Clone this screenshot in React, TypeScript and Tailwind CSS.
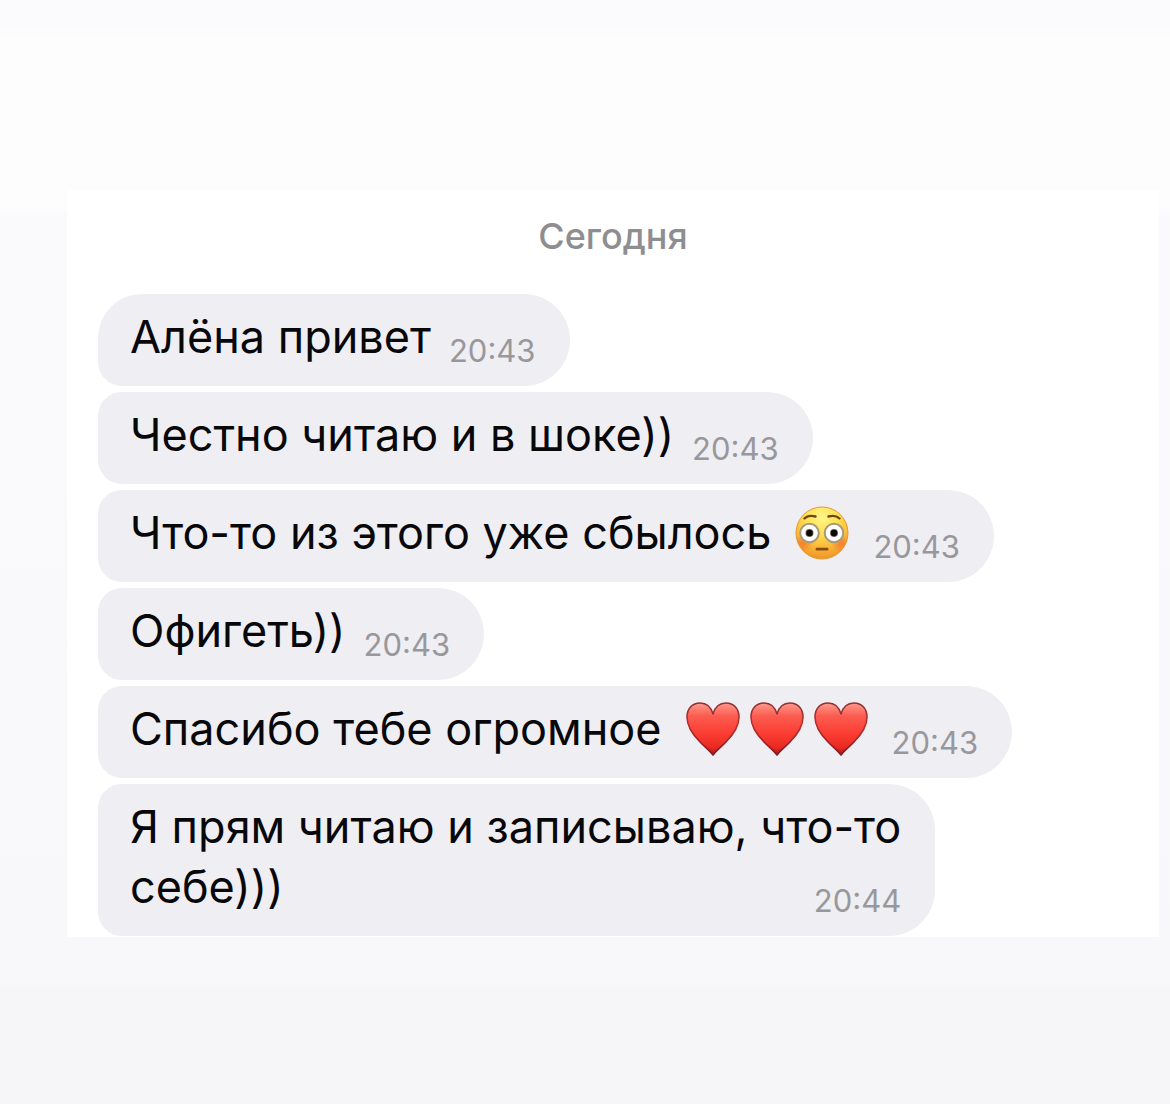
import { useId } from "react";
import clsx from "clsx";

type Message = {
  lines: string[];
  time: string;
  flushed?: boolean;
  hearts?: number;
};

const messages: Message[] = [
  { lines: ["Алёна привет"], time: "20:43" },
  { lines: ["Честно читаю и в шоке))"], time: "20:43" },
  { lines: ["Что-то из этого уже сбылось"], time: "20:43", flushed: true },
  { lines: ["Офигеть))"], time: "20:43" },
  { lines: ["Спасибо тебе огромное"], time: "20:43", hearts: 3 },
  { lines: ["Я прям читаю и записываю, что-то", "себе)))"], time: "20:44" },
];

function Heart() {
  const id = useId();
  return (
    <svg viewBox="0 0 54 54" className="h-[54px] w-[54px] shrink-0" aria-label="сердце" role="img">
      <defs>
        <linearGradient id={`${id}f`} x1="0" y1="0" x2="0" y2="1">
          <stop offset="0" stopColor="#ff9a8e" />
          <stop offset="0.25" stopColor="#fb5c50" />
          <stop offset="0.6" stopColor="#fb3c32" />
          <stop offset="0.85" stopColor="#e82a22" />
          <stop offset="1" stopColor="#a8181a" />
        </linearGradient>
        <linearGradient id={`${id}s`} x1="0" y1="0" x2="0" y2="1">
          <stop offset="0" stopColor="#8c3236" />
          <stop offset="0.4" stopColor="#b8302f" />
          <stop offset="1" stopColor="#7d1a1d" />
        </linearGradient>
      </defs>
      <path
        d="M27 53C24.500 49.500 20.500 46.500 14.500 40.500C6 32 1 24.500 1 15C1 6.500 6.500 1 14 1C20.500 1 25 5 27 12C29 5 33.500 1 40 1C47.500 1 53 6.500 53 15C53 24.500 48 32 39.500 40.500C33.500 46.500 29.500 49.500 27 53Z"
        fill={`url(#${id}f)`}
        stroke={`url(#${id}s)`}
        strokeWidth="1.6"
        strokeLinejoin="round"
      />
    </svg>
  );
}

function FlushedFace() {
  const id = useId();
  return (
    <svg viewBox="0 0 54 54" className="h-[54px] w-[54px] shrink-0" aria-label="смущение" role="img">
      <defs>
        <radialGradient id={`${id}f`} cx="0.5" cy="0.2" r="0.8">
          <stop offset="0" stopColor="#fff68a" />
          <stop offset="0.4" stopColor="#ffe050" />
          <stop offset="0.72" stopColor="#fab838" />
          <stop offset="1" stopColor="#ee9428" />
        </radialGradient>
        <radialGradient id={`${id}c`}>
          <stop offset="0" stopColor="#f4622a" stopOpacity="0.65" />
          <stop offset="1" stopColor="#f4622a" stopOpacity="0" />
        </radialGradient>
        <clipPath id={`${id}p`}>
          <circle cx="27" cy="27" r="26" />
        </clipPath>
      </defs>
      <circle cx="27" cy="27" r="26" fill={`url(#${id}f)`} stroke="#e39a2c" strokeWidth="1" />
      <g clipPath={`url(#${id}p)`} fill={`url(#${id}c)`}>
        <ellipse cx="8" cy="37" rx="10" ry="9" />
        <ellipse cx="46" cy="37" rx="10" ry="9" />
      </g>
      <path d="M9.500 12.500Q13.500 8.500 20.500 10.500" fill="none" stroke="#6d4512" strokeWidth="2.400" strokeLinecap="round" />
      <path d="M33.500 10.500Q40.500 8.500 44.500 12.500" fill="none" stroke="#6d4512" strokeWidth="2.400" strokeLinecap="round" />
      <circle cx="14.500" cy="27" r="9.300" fill="#fff" stroke="#a89a78" strokeWidth="2" />
      <circle cx="39" cy="27" r="9.300" fill="#fff" stroke="#a89a78" strokeWidth="2" />
      <circle cx="14.500" cy="27" r="4" fill="#7b6a5c" />
      <circle cx="39" cy="27" r="4" fill="#7b6a5c" />
      <circle cx="14.500" cy="27" r="3.200" fill="#0c0806" />
      <circle cx="39" cy="27" r="3.200" fill="#0c0806" />
      <path d="M22 43.200H32" stroke="#8a4b12" strokeWidth="2.800" strokeLinecap="round" />
    </svg>
  );
}

function Bubble({ message, first }: { message: Message; first: boolean }) {
  const { lines, time, flushed, hearts } = message;
  const last = lines.length - 1;
  const hasEmoji = flushed || hearts;

  return (
    <li
      className={clsx(
        "w-fit rounded-l-[24px] rounded-r-[46px] bg-[#efeef3] pt-[13px] pr-[34px] pb-[19px] pl-8",
        first && "rounded-tl-[44px]"
      )}
    >
      {lines.slice(0, last).map((line) => (
        <p key={line}>{line}</p>
      ))}
      <div className={clsx("flex items-end justify-between", hasEmoji ? "gap-6" : "gap-[18px]")}>
        <div className="flex items-center gap-6">
          <p>{lines[last]}</p>
          {flushed && <FlushedFace />}
          {hearts && (
            <div className="flex gap-[10px]">
              {Array.from({ length: hearts }, (_, i) => (
                <Heart key={i} />
              ))}
            </div>
          )}
        </div>
        <time className="text-[31px] leading-8 text-[#98989c]">{time}</time>
      </div>
    </li>
  );
}

export default function App() {
  return (
    <div className="min-h-screen bg-[linear-gradient(#fbfbfe_0px,#fbfbfe_28px,#fdfdfd_36px,#fdfdfd_208px,#fafafd_214px,#f9f9fc_600px,#f8f8fb_984px,#f6f6f9_990px)] pt-[190px] pr-[11px] pb-10 pl-[67px] font-['Inter','Liberation_Sans',sans-serif]">
      <main className="bg-white px-[31px] pt-6 pb-px">
        <h1 className="mb-9 text-center text-[36px] leading-[44px] font-medium text-[#8e8e91]">Сегодня</h1>
        <ul className="flex flex-col gap-[6px] text-[45px] leading-[60px] text-[#08080a]">
          {messages.map((message, i) => (
            <Bubble key={i} message={message} first={i === 0} />
          ))}
        </ul>
      </main>
    </div>
  );
}
